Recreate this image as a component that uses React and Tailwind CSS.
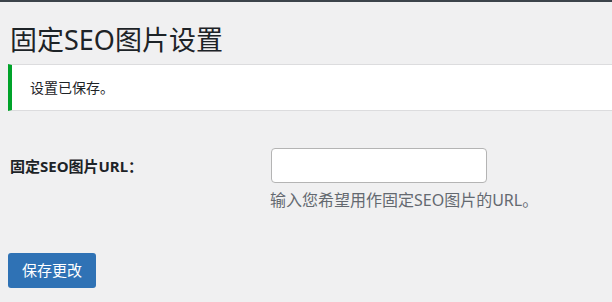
import React from 'react';

// Página de ajustes: imagen SEO fija
const App = () => {
    return (
        <div
            className="w-[612px] h-[302px] bg-[#f0f0f1] text-[#1d2327] overflow-hidden border-t-2 border-[#3c434a]"
            style={{ fontFamily: '"Noto Sans", "Noto Sans CJK SC", sans-serif' }}
        >
            <h1 className="pl-[10px] pt-[22px] text-[27px] leading-[32px] font-normal">固定SEO图片设置</h1>

            <div className="mt-[8px] ml-[8px] h-[47px] bg-white border-y border-[#dcdcde] border-l-4 border-l-[#00a32a] flex items-center pl-[18px]">
                <p className="text-[14px] leading-[20px]">设置已保存。</p>
            </div>

            <div className="flex pl-[10px] pt-[37px]">
                <label className="w-[261px] pt-[8px] text-[15px] leading-[20px] font-bold">固定SEO图片URL：</label>
                <div className="flex flex-col">
                    <input
                        type="text"
                        className="w-[216px] h-[35px] bg-white border border-[#b4b4b4] rounded-[4px] px-2"
                    />
                    <p className="mt-[6px] -ml-[1px] text-[16px] leading-[22px] text-[#646970]">输入您希望用作固定SEO图片的URL。</p>
                </div>
            </div>

            <div className="pl-[8px] pt-[42px]">
                <button className="w-[88px] h-[35px] bg-[#2f72b5] text-white text-[15px] rounded-[3px]">保存更改</button>
            </div>
        </div>
    );
};

export default App;
